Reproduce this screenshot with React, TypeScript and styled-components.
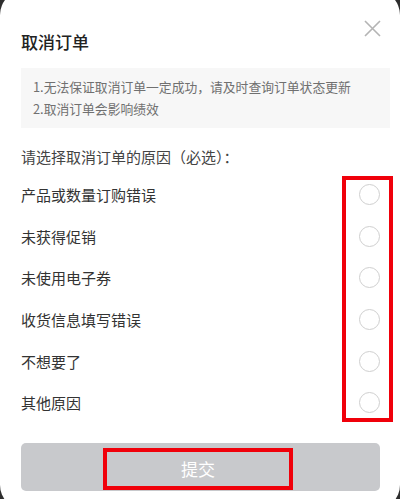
import styled, { createGlobalStyle } from "styled-components";

const GlobalStyle = createGlobalStyle`
  html, body {
    margin: 0;
    padding: 0;
    background: #2e2e2e;
    overflow: hidden;
  }
  body {
    font-family: "Noto Sans CJK SC", "Noto Sans", sans-serif;
  }`;

const Sheet = styled.div`
  position: relative;
  width: 400px;
  height: 520px;
  margin-top: -10px;
  padding: 40px 20px 0 21px;
  box-sizing: border-box;
  background: #fff;
  border-radius: 25px;`;

const Title = styled.h2`
  margin: 0;
  font-size: 17px;
  line-height: 24px;
  font-weight: 500;
  color: #222;`;

const CloseButton = styled.button`
  position: absolute;
  top: 28px;
  right: 18px;
  width: 20px;
  height: 20px;
  padding: 0;
  border: none;
  background: transparent;
  display: flex;
  align-items: center;
  justify-content: center;`;

const Notice = styled.div`
  margin: 14px -10px 0 0;
  padding: 8px 12px;
  background: #f7f7f7;
  font-size: 12.8px;
  line-height: 22px;
  color: #707070;`;

const Prompt = styled.div`
  margin-top: 17px;
  font-size: 15px;
  line-height: 24px;
  color: #444;`;

const Options = styled.div`
  position: relative;
  display: flex;
  flex-direction: column;
  margin-top: 5px;`;

const Option = styled.label`
  display: flex;
  align-items: center;
  justify-content: space-between;
  height: 41.6px;
  font-size: 15px;
  color: #333;`;

const Radio = styled.span`
  width: 19px;
  height: 19px;
  border: 1px solid #cfcfcf;
  border-radius: 50%;`;

const Highlight = styled.div`
  position: absolute;
  top: 2px;
  bottom: 2px;
  right: -13px;
  width: 51px;
  box-sizing: border-box;
  border: 4px solid #f0000a;
  pointer-events: none;`;

const Submit = styled.button`
  display: flex;
  align-items: flex-end;
  justify-content: center;
  width: 100%;
  height: 48px;
  margin-top: 19px;
  padding: 0 0 1px;
  border: none;
  border-radius: 5px;
  background: #c8c9cc;`;

const SubmitLabel = styled.span`
  display: flex;
  align-items: center;
  justify-content: center;
  width: 190px;
  height: 42px;
  margin-right: 5px;
  box-sizing: border-box;
  border: 4px solid #f0000a;
  font-family: "Noto Sans CJK SC", sans-serif;
  font-size: 17px;
  color: #fff;`;

const reasons = [
  "产品或数量订购错误",
  "未获得促销",
  "未使用电子券",
  "收货信息填写错误",
  "不想要了",
  "其他原因",
];

export default function App() {
  return (
    <>
      <GlobalStyle />
      <Sheet>
        <Title>取消订单</Title>
        <CloseButton aria-label="关闭">
          <svg width="17" height="17" viewBox="0 0 17 17">
            <path d="M1 1L16 16M16 1L1 16" stroke="#b4b4b4" strokeWidth="1.6" />
          </svg>
        </CloseButton>
        <Notice>
          <div>1.无法保证取消订单一定成功，请及时查询订单状态更新</div>
          <div>2.取消订单会影响绩效</div>
        </Notice>
        <Prompt>请选择取消订单的原因（必选）：</Prompt>
        <Options>
          {reasons.map((r) => (
            <Option key={r}>
              {r}
              <Radio />
            </Option>
          ))}
          <Highlight />
        </Options>
        <Submit>
          <SubmitLabel>提交</SubmitLabel>
        </Submit>
      </Sheet>
    </>
  );
}
